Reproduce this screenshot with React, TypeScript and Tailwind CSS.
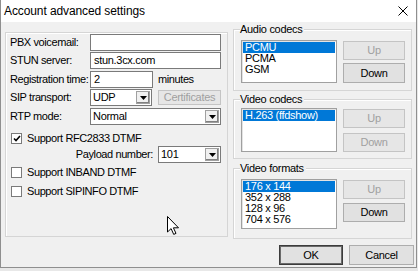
import React from 'react';

const FONT = { fontFamily: '"Liberation Sans", Arial, sans-serif' };

function GroupBox({ title, className, children }: { title?: string; className: string; children: React.ReactNode }) {
  return (
    <div className={`relative border border-[#d5d5d5] shadow-[inset_1px_1px_0_#ffffff] ${className}`}>
      {title && (
        <span className="absolute -top-[7px] left-[6px] bg-[#f0f0f0] pr-[2px] text-[11px] leading-[12px] tracking-[-0.3px] text-black">
          {title}
        </span>
      )}
      {children}
    </div>
  );
}

function TextBox({ value, className }: { value?: string; className: string }) {
  return (
    <div className={`flex h-[17px] items-center border border-[#7a7a7a] bg-white pl-[3px] text-[11px] tracking-[-0.3px] ${className}`}>
      {value}
    </div>
  );
}

function Select({ value, className }: { value: string; className: string }) {
  return (
    <div className={`flex h-[17px] items-center border border-[#7a7a7a] bg-white text-[11px] tracking-[-0.3px] ${className}`}>
      <span className="flex-1 pl-[2px]">{value}</span>
      <div className="m-[1px] flex h-[13px] w-[14px] items-center justify-center border border-[#a0a0a0] bg-[#f0f0f0] shadow-[inset_-1px_-1px_0_#808080]">
        <svg width="7" height="4" viewBox="0 0 7 4">
          <path d="M0 0h7L3.5 4z" fill="#000" />
        </svg>
      </div>
    </div>
  );
}

function Btn({ label, disabled, className }: { label: string; disabled?: boolean; className: string }) {
  return (
    <div
      className={`flex items-center justify-center border bg-[#e1e1e1] text-[11px] tracking-[-0.3px] ${
        disabled ? 'border-[#c4c4c4] bg-[#e6e6e6] text-[#a0a0a0]' : 'border-[#adadad] text-black'
      } ${className}`}
    >
      {label}
    </div>
  );
}

function CheckBox({ label, checked }: { label: string; checked?: boolean }) {
  return (
    <div className="flex h-[13px] items-center">
      <div className="ml-[1px] flex h-[11px] w-[11px] items-center justify-center border border-[#7a7a7a] bg-white">
        {checked && (
          <svg width="8" height="7" viewBox="0 0 8 7">
            <path d="M1 3.5l2 2L7 1" stroke="#000" strokeWidth="1.6" fill="none" />
          </svg>
        )}
      </div>
      <span className="ml-[5px] text-[11px] tracking-[-0.4px]">{label}</span>
    </div>
  );
}

function ListBox({ items, className }: { items: string[]; className: string }) {
  return (
    <div className={`border border-[#a0a0a0] bg-white p-[1px] shadow-[inset_1px_1px_0_#e3e3e3] ${className}`}>
      {items.map((it, i) => (
        <div
          key={it}
          className={`h-[11px] pl-[2px] text-[11px] leading-[11px] tracking-[-0.3px] ${
            i === 0 ? 'bg-[#0078d7] text-white' : 'text-black'
          }`}
        >
          {it}
        </div>
      ))}
    </div>
  );
}

export default function App() {
  return (
    <div className="relative h-[271px] w-[418px] overflow-hidden bg-[#e8e8e8] text-black" style={FONT}>
      <div className="flex h-[268px] w-[417px] flex-col border-x border-b border-[#8f8f8f] bg-[#f0f0f0]">
        {/* Title bar */}
        <div className="flex h-[22px] shrink-0 items-center justify-between bg-white pl-[3px] pr-[8px]">
          <span className="text-[12px] tracking-[-0.1px]">Account advanced settings</span>
          <svg width="10" height="10" viewBox="0 0 10 10">
            <path d="M0.5 0.5l9 9M9.5 0.5l-9 9" stroke="#000" strokeWidth="1" />
          </svg>
        </div>

        <div className="flex items-start pl-[4px]">
          {/* Left group */}
          <GroupBox className="mt-[10px] h-[205px] w-[223px]">
            <div className="flex flex-col pl-[4px] text-[11px] tracking-[-0.4px]">
              <div className="mt-[1px] flex items-center">
                <span className="w-[80px]">PBX voicemail:</span>
                <TextBox className="w-[131px]" />
              </div>
              <div className="mt-[1px] flex items-center">
                <span className="w-[80px]">STUN server:</span>
                <TextBox value="stun.3cx.com" className="w-[131px]" />
              </div>
              <div className="mt-[2px] flex items-center">
                <span className="w-[80px]">Registration time:</span>
                <TextBox value="2" className="w-[63px]" />
                <span className="ml-[5px]">minutes</span>
              </div>
              <div className="mt-[1px] flex items-center">
                <span className="w-[80px]">SIP transport:</span>
                <Select value="UDP" className="w-[62px]" />
                <Btn label="Certificates" disabled className="ml-[6px] h-[15px] w-[63px]" />
              </div>
              <div className="mt-[2px] flex items-center">
                <span className="w-[80px]">RTP mode:</span>
                <Select value="Normal" className="w-[131px]" />
              </div>
              <div className="mt-[7px]">
                <CheckBox label="Support RFC2833 DTMF" checked />
              </div>
              <div className="mt-[1px] flex items-center">
                <span className="w-[143px] text-right">Payload number:</span>
                <Select value="101" className="ml-[5px] w-[63px]" />
              </div>
              <div className="mt-[3px]">
                <CheckBox label="Support INBAND DTMF" />
              </div>
              <div className="mt-[6px]">
                <CheckBox label="Support SIPINFO DTMF" />
              </div>
            </div>
          </GroupBox>

          {/* Right column */}
          <div className="ml-[5px] mt-[7px] flex w-[179px] flex-col">
            <GroupBox title="Audio codecs" className="h-[62px]">
              <div className="flex pl-[7px] pt-[10px]">
                <ListBox items={['PCMU', 'PCMA', 'GSM']} className="h-[43px] w-[96px]" />
                <div className="ml-[6px] flex flex-col gap-[3px] pt-[1px]">
                  <Btn label="Up" disabled className="h-[19px] w-[62px]" />
                  <Btn label="Down" className="h-[20px] w-[62px]" />
                </div>
              </div>
            </GroupBox>

            <GroupBox title="Video codecs" className="mt-[8px] h-[60px]">
              <div className="flex pl-[7px] pt-[8px]">
                <ListBox items={['H.263 (ffdshow)']} className="h-[44px] w-[96px]" />
                <div className="ml-[6px] flex flex-col gap-[5px] pt-[1px]">
                  <Btn label="Up" disabled className="h-[19px] w-[62px]" />
                  <Btn label="Down" disabled className="h-[19px] w-[62px]" />
                </div>
              </div>
            </GroupBox>

            <GroupBox title="Video formats" className="mt-[9px] h-[71px]">
              <div className="flex pl-[7px] pt-[10px]">
                <ListBox items={['176 x 144', '352 x 288', '128 x 96', '704 x 576']} className="h-[50px] w-[96px]" />
                <div className="ml-[6px] flex flex-col gap-[4px] pt-[1px]">
                  <Btn label="Up" disabled className="h-[19px] w-[62px]" />
                  <Btn label="Down" className="h-[19px] w-[62px]" />
                </div>
              </div>
            </GroupBox>
          </div>
        </div>

        {/* Footer buttons */}
        <div className="mt-[6px] flex justify-end gap-[6px] pr-[2px]">
          <Btn label="OK" className="h-[20px] w-[64px] !border-[#3c3c3c] shadow-[inset_0_0_0_1px_#6a6a6a]" />
          <Btn label="Cancel" className="h-[20px] w-[65px]" />
        </div>
      </div>

      {/* Mouse cursor */}
      <svg className="absolute left-[167px] top-[216px]" width="12" height="19" viewBox="0 0 12 19">
        <path d="M0.5 0.5v15.5l3.6-3.4 2.6 5.8 2.3-1-2.6-5.6h5.1z" fill="#fff" stroke="#000" strokeWidth="1" strokeLinejoin="round" />
      </svg>
    </div>
  );
}
